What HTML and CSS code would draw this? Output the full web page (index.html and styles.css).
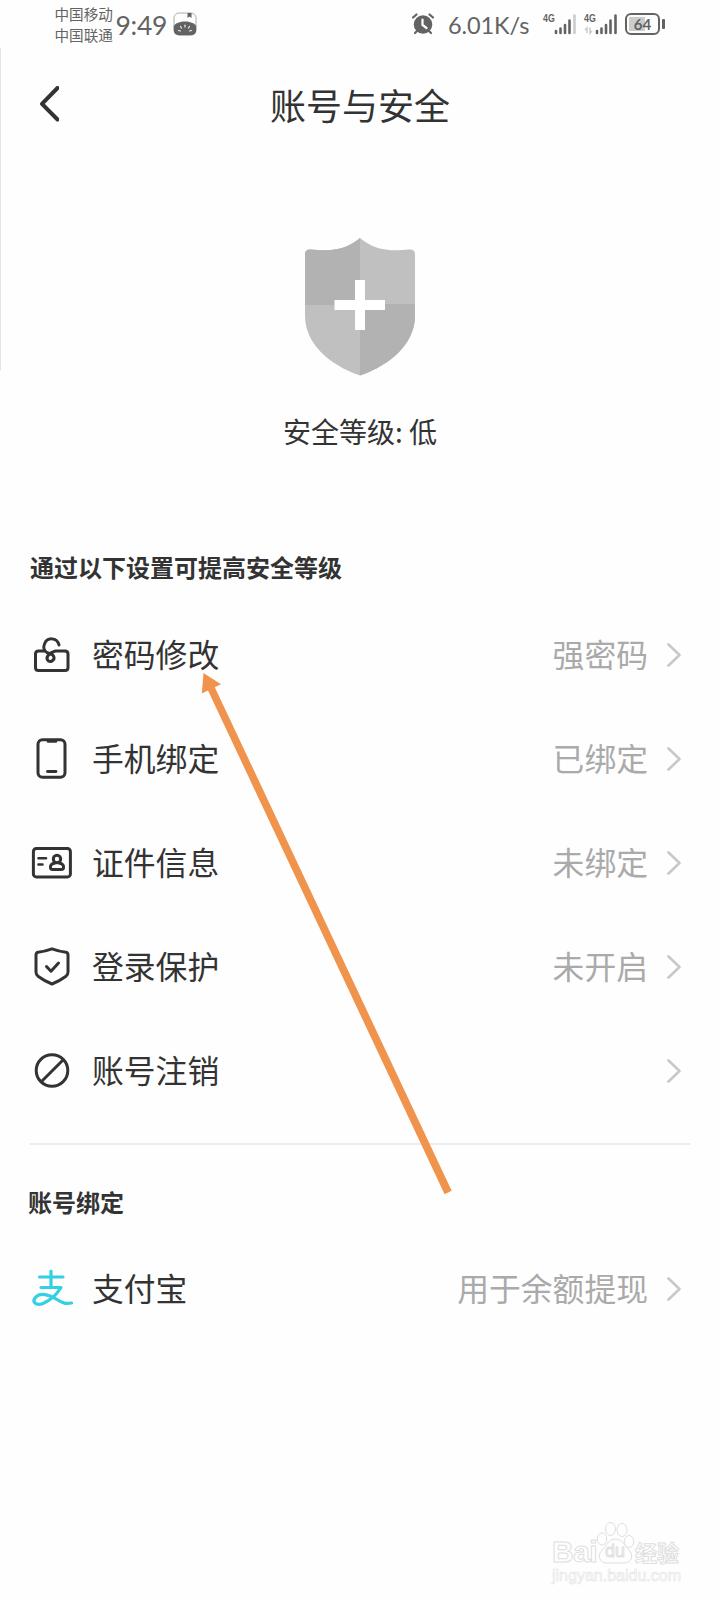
FILE: index.html
```html
<!DOCTYPE html>
<html lang="zh-CN">
<head>
<meta charset="utf-8">
<title>账号与安全</title>
<link rel="stylesheet" href="styles.css">
</head>
<body>
<div class="page">
  <div class="status">
    <div class="carriers"><span>中国移动</span><span>中国联通</span></div>
    <span class="clock">9:49</span>
    <svg class="app-badge" width="24" height="24" viewBox="0 0 24 24">
      <rect x="1" y="1" width="22" height="22" rx="5" fill="#fefefe" stroke="#999" stroke-width=".8"/>
      <path d="M.8 14C4 8 20 8 23.200 14V18Q23.200 23.200 18 23.200H6Q.8 23.200 .8 18Z" fill="#636363"/>
      <path d="M14.500 1H18.500V6L16.500 4.500 14.500 6Z" fill="#636363"/>
      <path d="M12 13v2M7.500 14.500l1 1.500M16.500 14.500l-1 1.500M5.500 18.500l2 .5M18.500 18.500l-2 .5" stroke="#eee" stroke-width="1.200" stroke-linecap="round"/>
    </svg>
    <span class="grow"></span>
    <svg class="alarm" width="24" height="24" viewBox="0 0 24 24">
      <circle cx="12" cy="12.500" r="9.300" fill="#636363"/>
      <path d="M2 5.500L5.500 2.500M22 5.500L18.500 2.500M6 19L4 21M18 19L20 21" stroke="#636363" stroke-width="2.200" stroke-linecap="round"/>
      <path d="M11.500 7.500V13L15.500 16" fill="none" stroke="#fefefe" stroke-width="2.200" stroke-linecap="round"/>
    </svg>
    <span class="speed">6.01K/s</span>
    <div class="signal">
      <span class="net">4G</span>
      <svg width="33" height="24" viewBox="0 0 33 24"><path d="M13 19v2M17.500 16.500V21M22 13V21M26.500 8.500V21" stroke="#636363" stroke-width="2.600" stroke-linecap="round"/><path d="M31.500 3.500V21" stroke="#ccc" stroke-width="2.600" stroke-linecap="round"/></svg>
    </div>
    <div class="signal second">
      <span class="net">4G</span>
      <svg width="33" height="24" viewBox="0 0 33 24"><path d="M13 19v2M17.500 16.500V21M22 13V21M26.500 8.500V21M31.500 3.500V21" stroke="#636363" stroke-width="2.600" stroke-linecap="round"/><path d="M3 21V16L1 18M6 15.500V21L8 19" fill="none" stroke="#ccc" stroke-width="1.600"/></svg>
    </div>
    <div class="battery"><span>64</span></div>
    <i class="battery-tip"></i>
  </div>

  <header class="header">
    <svg class="back" width="20" height="36" viewBox="0 0 20 36"><path d="M18.500 2L3 17.800 18.500 33.500" fill="none" stroke="#333" stroke-width="4" stroke-linecap="round" stroke-linejoin="round"/></svg>
    <h1 class="title">账号与安全</h1>
  </header>

  <section class="level">
    <svg width="110" height="138" viewBox="0 0 110 138">
      <defs><clipPath id="shield"><path d="M55 0C68 11 83 14 104 11.500Q110 11 110 16V78C110 105 86 127 55 137.500 24 127 0 105 0 78V16Q0 11 6 11.500C27 14 42 11 55 0Z"/></clipPath></defs>
      <g clip-path="url(#shield)">
        <rect width="110" height="138" fill="#c0c0c0"/>
        <path d="M0 0H55V67H0ZM55 66H110V138H55Z" fill="#b2b2b2"/>
      </g>
      <path d="M50 42H60V62H80V72H60V92H50V72H29.500V62H50Z" fill="#fff"/>
    </svg>
    <p class="level-text">安全等级: 低</p>
  </section>

  <h2 class="heading">通过以下设置可提高安全等级</h2>
  <ul class="list">
    <li class="row">
      <svg class="icon" width="42" height="42" viewBox="0 0 42 42"><g fill="none" stroke="#333" stroke-width="3" stroke-linecap="round" stroke-linejoin="round"><path d="M13.500 17H7.500Q4.500 17 4.500 20V33.500Q4.500 36.500 7.500 36.500H34Q37 36.500 37 33.500V20Q37 17 34 17H24.500Q20 18 17.500 21C14 25 17.500 28.500 21 27 25 24.500 22.500 20 18.500 19.500 12.500 18 12 13.500 13.500 10 16 3 26 3 28 11"/></g></svg>
      <span class="label">密码修改</span><span class="value">强密码</span>
      <svg class="chev" width="15" height="24" viewBox="0 0 15 24"><path d="M1.500 1.500L12.500 12 1.500 22.500"/></svg>
    </li>
    <li class="row">
      <svg class="icon" width="42" height="42" viewBox="0 0 42 42"><g fill="none" stroke="#333" stroke-width="3" stroke-linecap="round"><rect x="7" y="1.800" width="27" height="37.500" rx="4.500"/><path d="M17 3.600H25" stroke-width="2.400"/><path d="M16.500 33.500H25" stroke-width="2.800"/></g></svg>
      <span class="label">手机绑定</span><span class="value">已绑定</span>
      <svg class="chev" width="15" height="24" viewBox="0 0 15 24"><path d="M1.500 1.500L12.500 12 1.500 22.500"/></svg>
    </li>
    <li class="row">
      <svg class="icon" width="42" height="42" viewBox="0 0 42 42"><g fill="none" stroke="#333" stroke-width="3" stroke-linecap="round" stroke-linejoin="round"><rect x="2.400" y="6.400" width="37" height="28.500" rx="3"/><path d="M7.500 16.200H15M7.500 22.500H11.500" stroke-width="2.600"/><circle cx="26" cy="17" r="3.700"/><path d="M24 21Q19 22 19.500 25.500 19.500 27.500 22 27.500H30Q32.500 27.500 32.500 25.500 33 22 28 21"/></g></svg>
      <span class="label">证件信息</span><span class="value">未绑定</span>
      <svg class="chev" width="15" height="24" viewBox="0 0 15 24"><path d="M1.500 1.500L12.500 12 1.500 22.500"/></svg>
    </li>
    <li class="row">
      <svg class="icon" width="42" height="42" viewBox="0 0 42 42"><g fill="none" stroke="#333" stroke-width="3" stroke-linecap="round" stroke-linejoin="round"><path d="M21 2.800Q28.500 5.500 35 6.200 37 6.600 37 9V26Q37 28.500 35 30.200 28.500 35 21 38 13.500 35 7 30.200 5 28.500 5 26V9Q5 6.600 7 6.200 13.500 5.500 21 2.800Z"/><path d="M15.500 20.500L20 25.200 27.500 17"/></g></svg>
      <span class="label">登录保护</span><span class="value">未开启</span>
      <svg class="chev" width="15" height="24" viewBox="0 0 15 24"><path d="M1.500 1.500L12.500 12 1.500 22.500"/></svg>
    </li>
    <li class="row">
      <svg class="icon" width="42" height="42" viewBox="0 0 42 42"><g fill="none" stroke="#333" stroke-width="3"><circle cx="21" cy="20.500" r="15.800"/><path d="M10.500 31.500L32 10"/></g></svg>
      <span class="label">账号注销</span><span class="value"></span>
      <svg class="chev" width="15" height="24" viewBox="0 0 15 24"><path d="M1.500 1.500L12.500 12 1.500 22.500"/></svg>
    </li>
  </ul>
  <hr class="divider">
  <h2 class="heading bind">账号绑定</h2>
  <ul class="list">
    <li class="row">
      <svg class="icon" width="42" height="42" viewBox="0 0 42 42"><g fill="none" stroke="#33cfe2" stroke-width="3.200" stroke-linecap="round" stroke-linejoin="round"><path d="M20 3V19M8.500 9H32M10 19.500H30C26 26 20 32 12 35.500 5 38 1 34 4 30 9 23.500 19 27 26 31.500 32 35.500 35 36 40.500 35"/></g></svg>
      <span class="label">支付宝</span><span class="value">用于余额提现</span>
      <svg class="chev" width="15" height="24" viewBox="0 0 15 24"><path d="M1.500 1.500L12.500 12 1.500 22.500"/></svg>
    </li>
  </ul>

  <i class="edge"></i>
  <svg class="pointer" width="720" height="1600" viewBox="0 0 720 1600"><path d="M203.500 673L221 684.200 214.800 687.200 451.700 1190.800 444.600 1194.200 208 690.500 201.800 693.500Z" fill="#f0944d"/></svg>

  <div class="watermark">
    <div class="brand">
      <span class="bai">Bai</span>
      <span class="paw">
        <svg width="40" height="44" viewBox="0 0 40 44"><g fill="#fefefe" stroke="#dedede" stroke-width="1"><ellipse cx="7" cy="18" rx="4.800" ry="6"/><ellipse cx="15.500" cy="8" rx="5" ry="6.500"/><ellipse cx="27" cy="9" rx="5" ry="6.500"/><ellipse cx="34" cy="20.500" rx="4.800" ry="6"/><path d="M20.500 18C27 18 29 24 34 29 39 34 37 42 29 42H12C3 42 3 33 7 29 12 24 14 18 20.500 18Z"/></g></svg>
        <span class="du">du</span>
      </span>
      <span class="jy">经验</span>
    </div>
    <div class="site">jingyan.baidu.com</div>
  </div>
</div>
</body>
</html>
```

FILE: styles.css
```css
* { box-sizing: border-box; }
body {
  margin: 0;
  background: #fefefe;
  color: #333;
  font-family: "Noto Sans CJK SC", sans-serif;
}
h1, h2, p, ul { margin: 0; padding: 0; font-weight: 400; }
ul { list-style: none; }
svg { display: block; flex: none; }
.page { position: relative; width: 720px; height: 1600px; overflow: hidden; }

.status { display: flex; height: 48px; padding: 0 55px 0 54.500px; color: #636363; }
.carriers { display: flex; flex-direction: column; width: 61px; padding-top: 3px; font-size: 14.600px; line-height: 21px; white-space: nowrap; }
.clock { width: 57px; font: 26.500px/48px Lato, sans-serif; padding-top: 1px; letter-spacing: -.3px; }
.app-badge { margin-top: 12px; }
.grow { flex: 1; }
.alarm { margin-top: 12px; }
.speed { width: 95px; margin-left: 13px; font: 23.500px/51px Lato, sans-serif; letter-spacing: -.1px; white-space: nowrap; }
.signal { position: relative; width: 33px; margin: 12px 8px 0 0; }
.signal.second { margin-right: 8px; }
.net { position: absolute; left: 0; top: 0; font: bold 11px/13px "Liberation Sans", sans-serif; transform: scaleX(.8); transform-origin: left; }
.battery { width: 35px; height: 22px; margin-top: 13px; border: 2px solid #636363; border-radius: 6px; padding: 0; background: linear-gradient(#ccc, #ccc) 2px 2px / 16px 14px no-repeat; }
.battery span { display: block; font: bold 15px/18px Lato, sans-serif; text-align: center; }
.battery-tip { width: 3px; height: 10px; margin: 19px 0 0 2px; border-radius: 1px; background: #636363; }

.header { display: grid; grid-template-columns: 90px 1fr 90px; align-items: center; height: 112px; }
.back { margin-left: 39px; }
.title { text-align: center; font-size: 36px; line-height: 50px; }

.level { display: flex; flex-direction: column; align-items: center; height: 378px; padding-top: 78px; }
.level-text { margin-top: 35px; font-size: 28px; line-height: 40px; }

.heading { height: 65px; padding: 11px 0 0 30px; font-size: 24px; line-height: 36px; font-weight: 700; }
.row { display: flex; align-items: center; height: 104px; padding: 0 38px 0 31px; }
.list { font-size: 31.800px; line-height: 44px; }
.label { margin-left: 19px; padding-bottom: 4px; }
.value { flex: 1; text-align: right; color: #aaa; margin-right: 19px; padding-bottom: 4px; }
.chev path { fill: none; stroke: #c8c8c8; stroke-width: 2.600; stroke-linecap: round; stroke-linejoin: round; }
.divider { height: 2px; margin: 20px 30px 0; border: 0; background: #ececec; }
.bind { height: 92px; padding: 39px 0 0 28px; }

.edge { position: absolute; left: 0; top: 48px; width: 1px; height: 322px; background: #e4e4e4; }
.pointer { position: absolute; left: 0; top: 0; pointer-events: none; }

.watermark { position: absolute; left: 552px; top: 1521px; width: 132px; font-family: "Liberation Sans", "Noto Sans CJK SC", sans-serif; font-weight: 700; color: #fefefe; -webkit-text-stroke: 1px #dedede; }
.brand { display: flex; align-items: flex-end; height: 44px; }
.bai { width: 43px; font-size: 30px; line-height: 32px; letter-spacing: -.5px; margin-bottom: -3px; }
.paw { position: relative; width: 40px; }
.du { position: absolute; left: 10px; top: 20px; font-size: 18px; line-height: 20px; font-weight: 400; }
.jy { font-size: 22px; line-height: 24px; white-space: nowrap; margin-bottom: -1px; }
.site { margin-top: 1px; font-size: 16px; line-height: 20px; font-weight: 400; -webkit-text-stroke: .6px #e4e4e4; white-space: nowrap; }
```
